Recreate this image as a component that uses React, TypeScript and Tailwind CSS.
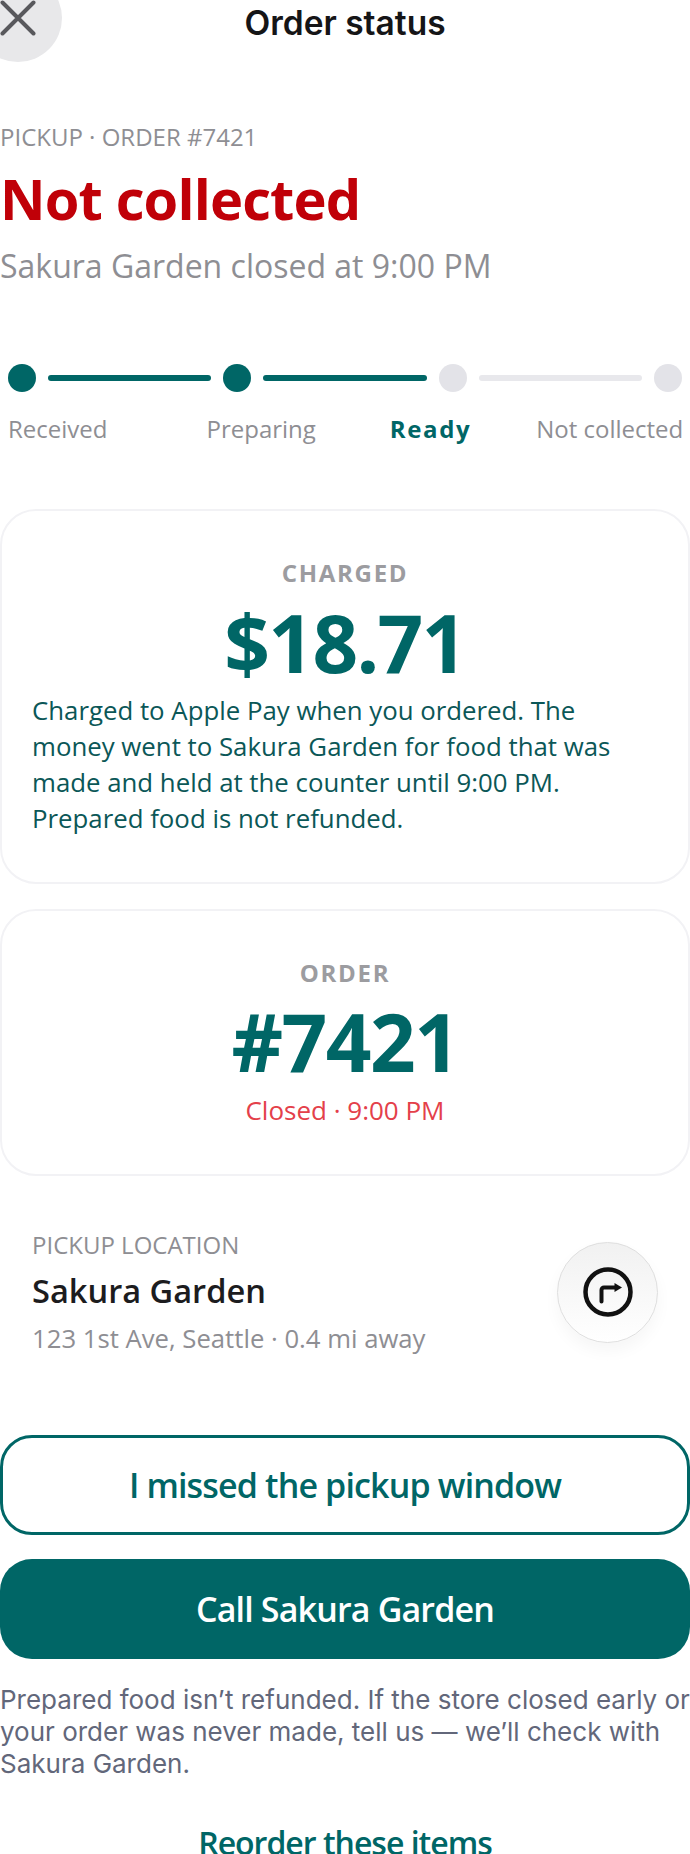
const openSans = 'font-["Open_Sans",sans-serif]';

function Stepper() {
  const done = 'w-7 h-7 rounded-full bg-[#006666] shrink-0';
  const todo = 'w-7 h-7 rounded-full bg-[#e3e3e8] shrink-0';
  const lineOn = 'flex-1 h-1.5 rounded-full bg-[#006666]';
  const lineOff = 'flex-1 h-1.5 rounded-full bg-[#e8e8ec]';
  return (
    <div className="mt-[77px] px-2">
      <div className="flex items-center gap-3">
        <div className={done} />
        <div className={lineOn} />
        <div className={done} />
        <div className={lineOn} />
        <div className={todo} />
        <div className={lineOff} />
        <div className={todo} />
      </div>
      <div className="mt-[21px] flex text-2xl leading-8 text-[#8e8e93] whitespace-nowrap">
        <span>Received</span>
        <span className="ml-[99px]">Preparing</span>
        <span className="ml-[74px] font-bold tracking-[1.6px] text-[#006666]">Ready</span>
        <span className="ml-[65px]">Not collected</span>
      </div>
    </div>
  );
}

function DirectionsButton() {
  return (
    <button className="w-[101px] h-[101px] rounded-full border border-[#dedede] bg-gradient-to-b from-[#f1f1f1] to-white shadow-[0_8px_16px_rgba(0,0,0,0.04)] flex items-center justify-center shrink-0">
      <svg width="50" height="50" viewBox="0 0 50 50" fill="none">
        <circle cx="25" cy="25" r="22.5" stroke="#111" strokeWidth="4.5" />
        <path d="M18.5 34.5V23a2.5 2.5 0 0 1 2.5-2.5H33" stroke="#111" strokeWidth="4" strokeLinecap="round" />
        <path d="M31.5 16l7.5 4.5-7.5 4.5z" fill="#111" />
      </svg>
    </button>
  );
}

export default function App() {
  return (
    <div className={`relative w-[690px] h-[1854px] overflow-hidden bg-white ${openSans}`}>
      {/* close button hangs off the corner */}
      <button className="absolute -left-[26px] -top-[26px] w-[88px] h-[88px] rounded-full bg-[#e8e8ea] flex items-center justify-center">
        <svg width="36" height="36" viewBox="0 0 36 36" fill="none">
          <path d="M2.5 2.5l31 31M33.5 2.5l-31 31" stroke="#58585c" strokeWidth="4" strokeLinecap="round" />
        </svg>
      </button>

      <div className='pt-[4px] text-center text-[33.5px] leading-[38px] font-semibold text-[#151517] font-["Inter",sans-serif]'>
        Order status
      </div>

      <div className="mt-[79px] text-2xl leading-8 text-[#8e8e93]">PICKUP · ORDER #7421</div>
      <h1 className="mt-[13px] text-[56px] leading-[64px] font-bold tracking-[-0.85px] text-[#c00008]">Not collected</h1>
      <div className="mt-[15px] text-[32px] leading-[42px] text-[#8e8e93]">Sakura Garden closed at 9:00 PM</div>

      <Stepper />

      <section className="mt-[64px] h-[375px] rounded-[36px] border-2 border-[#f2f2f5] pt-[46px] flex flex-col items-center">
        <div className="text-2xl leading-[32px] font-bold tracking-[1.7px] text-[#9c9ca0]">CHARGED</div>
        <div className="mt-[8px] text-[80px] leading-[90px] font-bold tracking-[-1.7px] text-[#006666]">$18.71</div>
        <p className="mt-[5px] self-start pl-[30px] pr-[70px] text-[25.8px] leading-[36px] text-[#0b5757]">
          Charged to Apple Pay when you ordered. The money went to Sakura Garden for food that was made and held at the counter until 9:00 PM. Prepared food is not refunded.
        </p>
      </section>

      <section className="mt-[25px] h-[267px] rounded-[36px] border-2 border-[#f2f2f5] pt-[46px] flex flex-col items-center">
        <div className="text-2xl leading-[32px] font-bold tracking-[1.7px] text-[#9c9ca0]">ORDER</div>
        <div className="mt-[7px] text-[80px] leading-[90px] font-bold tracking-[-1.5px] text-[#006666]">#7421</div>
        <div className="mt-[8px] text-[26px] leading-[32px] text-[#e4404a]">Closed · 9:00 PM</div>
      </section>

      <section className="mt-[53px] pl-[32px] pr-[32px] flex items-center justify-between">
        <div>
          <div className="text-2xl leading-8 text-[#8e8e93]">PICKUP LOCATION</div>
          <div className="mt-[9px] text-[32.6px] leading-[42px] font-semibold text-[#1c1c1e]">Sakura Garden</div>
          <div className="mt-[11px] text-[25.7px] leading-8 text-[#8e8e93]">123 1st Ave, Seattle · 0.4 mi away</div>
        </div>
        <DirectionsButton />
      </section>

      <button className="mt-[80px] w-full h-[100px] rounded-[32px] border-[3px] border-[#006666] bg-white text-[34px] font-semibold tracking-[-0.85px] text-[#006666]">
        I missed the pickup window
      </button>
      <button className="mt-[24px] block w-full h-[100px] rounded-[32px] bg-[#006666] text-[34px] font-semibold tracking-[-0.85px] text-white">
        Call Sakura Garden
      </button>

      <p className='mt-[25px] text-[26px] leading-8 text-[#62677a] font-["Inter",sans-serif]'>
        Prepared food isn’t refunded. If the store closed early or your order was never made, tell us — we’ll check with Sakura Garden.
      </p>

      <div className="mt-[44px] text-center text-[32px] leading-[38px] font-semibold tracking-[-1px] text-[#006666]">Reorder these items</div>
    </div>
  );
}
